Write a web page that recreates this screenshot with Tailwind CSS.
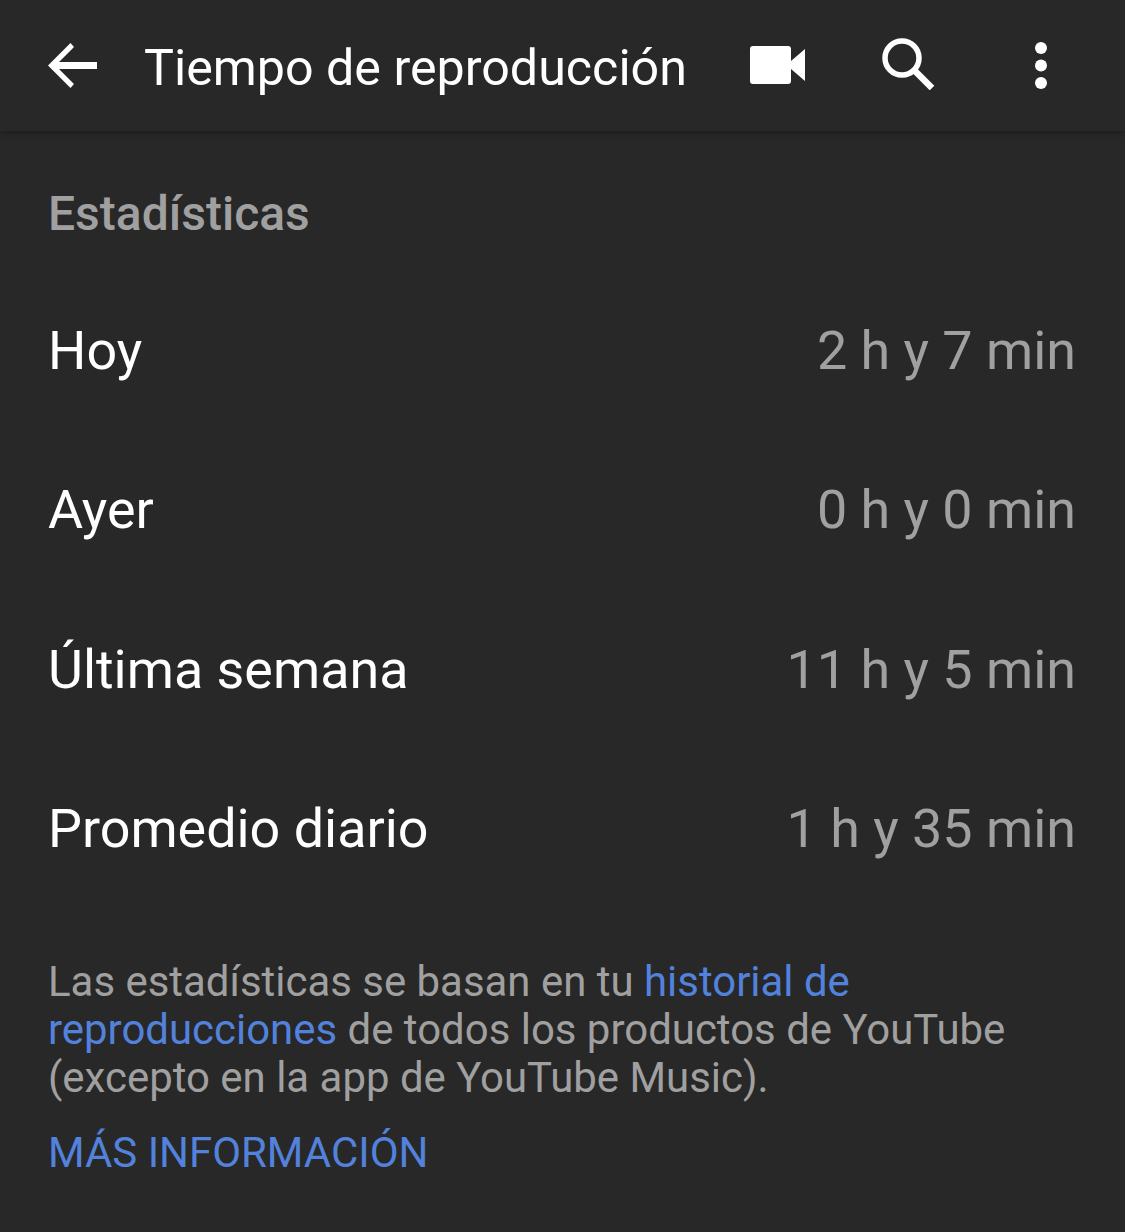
<!doctype html>
<html><head><script src="https://cdn.jsdelivr.net/npm/@tailwindcss/browser@4"></script></head>
<body class="bg-[#282828] font-['Roboto',sans-serif]">
<div class="w-[1125px] h-[1232px] bg-[#282828] overflow-hidden">
<header class="h-[131px] bg-[#282828] shadow-[0_2px_6px_rgba(0,0,0,0.3)] flex items-center relative">
<svg class="absolute left-[47px] top-[41px]" width="50" height="49" viewBox="0 0 50 49"><path d="M50 21H12L27 6L23.5 2L1 24.5L23.5 47L27 43L12 28H50Z" fill="#fff"/></svg>
<div class="ml-[144px] text-[50.2px] leading-[56px] text-white mt-[4px]">Tiempo de reproducción</div>
<svg class="absolute left-[750px] top-[46px]" width="55" height="38" viewBox="0 0 55 38"><path d="M3 0H38a3 3 0 0 1 3 3V15L55 3V35L41 23V35a3 3 0 0 1-3 3H3a3 3 0 0 1-3-3V3a3 3 0 0 1 3-3Z" fill="#fff"/></svg>
<svg class="absolute left-[882px] top-[38px]" width="53" height="52" viewBox="0 0 53 52" fill="none" stroke="#fff"><circle cx="20" cy="20" r="17" stroke-width="5.5"/><path d="M32 32L50 50" stroke-width="6.5"/></svg>
<svg class="absolute left-[1033px] top-[41px]" width="16" height="49" viewBox="0 0 16 49" fill="#fff"><circle cx="8" cy="7" r="6"/><circle cx="8" cy="24.5" r="6"/><circle cx="8" cy="42" r="6"/></svg>
</header>
<main class="pl-[48px] pr-[49px]">
<h2 class="mt-[55px] text-[48px] leading-[56px] font-medium text-[#a0a0a0]">Estadísticas</h2>
<div class="mt-[53px] flex flex-col gap-[47.4px] text-[53.85px] leading-[112px]">
<div class="flex justify-between h-[112px]"><span class="text-white">Hoy</span><span class="text-[#a0a0a0]">2 h y 7 min</span></div>
<div class="flex justify-between h-[112px]"><span class="text-white">Ayer</span><span class="text-[#a0a0a0]">0 h y 0 min</span></div>
<div class="flex justify-between h-[112px]"><span class="text-white">Última semana</span><span class="text-[#a0a0a0]">11 h y 5 min</span></div>
<div class="flex justify-between h-[112px]"><span class="text-white">Promedio diario</span><span class="text-[#a0a0a0]">1 h y 35 min</span></div>
</div>
<p class="mt-[73px] text-[41.95px] leading-[48px] text-[#a0a0a0]">Las estadísticas se basan en tu <span class="text-[#5282dc]">historial de<br>reproducciones</span> de todos los productos de YouTube<br>(excepto en la app de YouTube Music).</p>
<div class="mt-[27px] text-[41.95px] leading-[48px] text-[#5282dc]">MÁS INFORMACIÓN</div>
</main>
</div>
</body></html>
